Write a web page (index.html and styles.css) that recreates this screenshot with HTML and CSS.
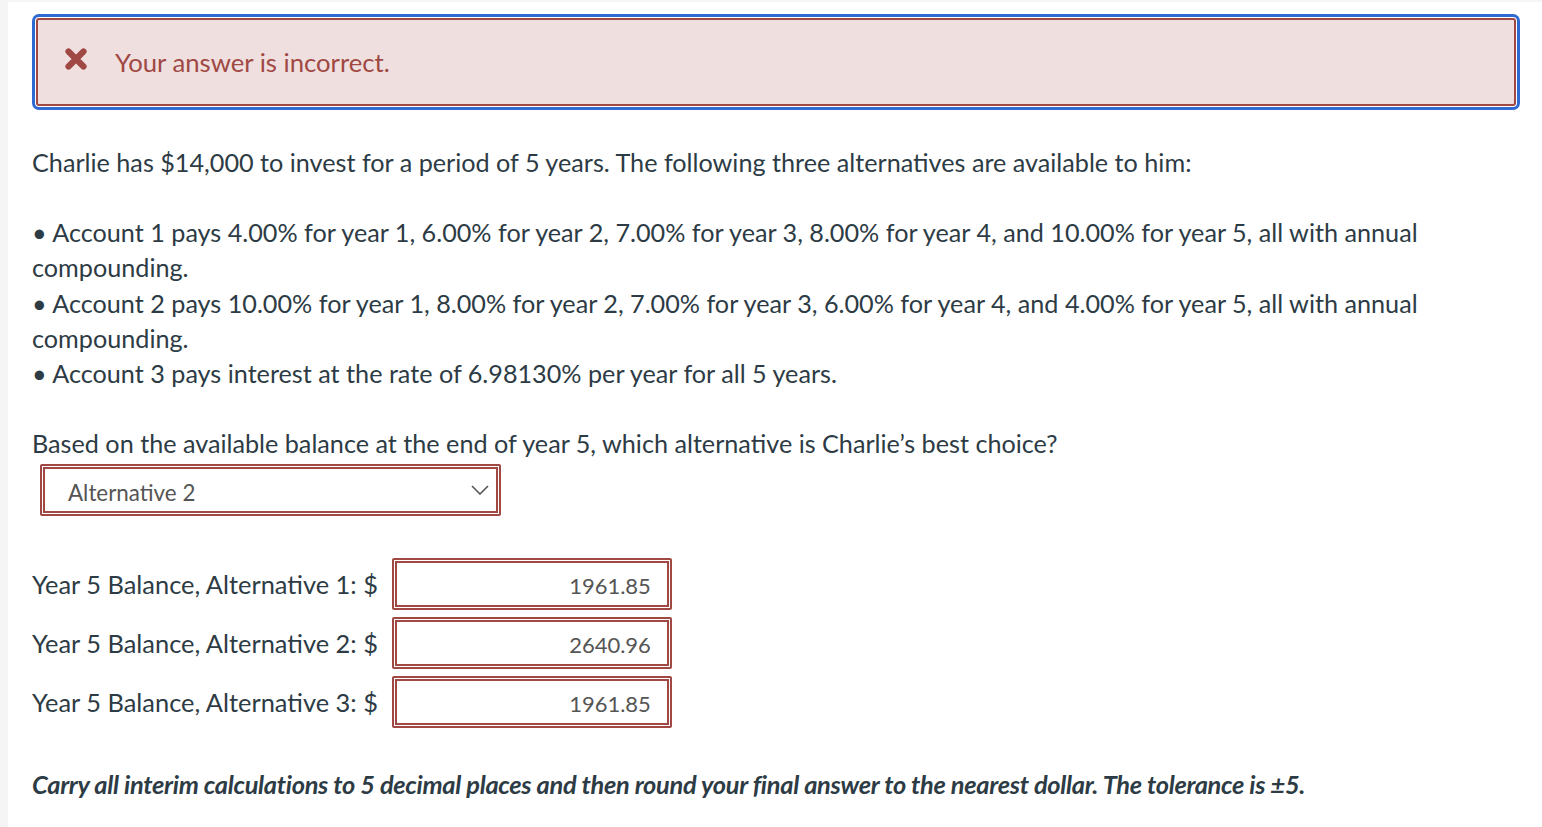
FILE: index.html
```html
<!DOCTYPE html>
<html lang="en">
<head>
<meta charset="utf-8">
<title>Question</title>
<link rel="stylesheet" href="styles.css">
</head>
<body>
<div class="panel">
  <div class="alert-focus">
    <div class="alert">
      <svg class="alert-icon" width="24" height="24" viewBox="0 0 24 24" aria-hidden="true">
        <path d="M4.5 4.5 L19.5 19.5 M19.5 4.5 L4.5 19.5" stroke="#a04843" stroke-width="6.2" stroke-linecap="round" fill="none"/>
      </svg>
      <span class="alert-text">Your answer is incorrect.</span>
    </div>
  </div>

  <p class="para">Charlie has $14,000 to invest for a period of 5 years. The following three alternatives are available to him:</p>

  <p class="para">• Account 1 pays 4.00% for year 1, 6.00% for year 2, 7.00% for year 3, 8.00% for year 4, and 10.00% for year 5, all with annual compounding.<br>• Account 2 pays 10.00% for year 1, 8.00% for year 2, 7.00% for year 3, 6.00% for year 4, and 4.00% for year 5, all with annual compounding.<br>• Account 3 pays interest at the rate of 6.98130% per year for all 5 years.</p>

  <p class="para question">Based on the available balance at the end of year 5, which alternative is Charlie’s best choice?</p>

  <div class="select">
    <span class="select-value">Alternative 2</span>
    <svg class="chevron" width="18" height="10" viewBox="0 0 18 10" aria-hidden="true">
      <path d="M1 1 L9 9 L17 1" stroke="#555" stroke-width="1.6" fill="none"/>
    </svg>
  </div>

  <div class="rows">
    <div class="row">
      <span class="label">Year 5 Balance, Alternative 1: $</span>
      <div class="field">1961.85</div>
    </div>
    <div class="row">
      <span class="label">Year 5 Balance, Alternative 2: $</span>
      <div class="field">2640.96</div>
    </div>
    <div class="row">
      <span class="label">Year 5 Balance, Alternative 3: $</span>
      <div class="field">1961.85</div>
    </div>
  </div>

  <p class="note">Carry all interim calculations to 5 decimal places and then round your final answer to the nearest dollar. The tolerance is ±5.</p>
</div>
</body>
</html>
```

FILE: styles.css
```css
html, body {
  margin: 0;
  padding: 0;
}
body {
  background: #f5f5f5;
  font-family: Lato, "Open Sans", sans-serif;
  color: #2d3b45;
  height: 827px;
  overflow: hidden;
}
.panel {
  background: #ffffff;
  margin: 2px 0 0 8px;
  padding: 12px 22px 40px 24px;
  min-height: 800px;
}
.alert-focus {
  border: 3px solid #2f69d2;
  border-radius: 7px;
  padding: 1px;
}
.alert {
  background: #efdfdf;
  border: 2px solid #a04843;
  border-radius: 3px;
  height: 88px;
  display: flex;
  align-items: center;
  padding-left: 26px;
  box-sizing: border-box;
}
.alert-icon {
  flex: none;
  margin-top: -6px;
}
.alert-text {
  color: #a04843;
  font-size: 25.7px;
  margin-left: 27px;
}
.para {
  font-size: 25.2px;
  line-height: 35.2px;
  margin: 35px 0 0 0;
}
.para + .para {
  margin-top: 35px;
}
.select {
  margin: 3px 0 0 8px;
  width: 461px;
  height: 52px;
  box-sizing: border-box;
  border: 2px solid #a04843;
  box-shadow: inset 0 0 0 1px #fff, inset 0 0 0 3px #a04843;
  border-radius: 2px;
  display: flex;
  align-items: center;
  justify-content: space-between;
  padding: 4px 10px 0 26px;
}
.select-value {
  font-size: 22.4px;
  color: #555555;
}
.chevron {
  margin-top: -4px;
}
.rows {
  display: flex;
  flex-direction: column;
  gap: 7px;
  margin-top: 42px;
}
.row {
  display: flex;
  align-items: center;
}
.label {
  font-size: 25.4px;
  margin-right: 14px;
}
.field {
  width: 280px;
  height: 52px;
  box-sizing: border-box;
  border: 2px solid #a04843;
  box-shadow: inset 0 0 0 1px #fff, inset 0 0 0 3px #a04843;
  border-radius: 2px;
  display: flex;
  align-items: center;
  justify-content: flex-end;
  padding: 2px 19px 0 0;
  font-size: 22px;
  color: #555555;
}
.note {
  margin: 39px 0 0 0;
  font-size: 25.4px;
  line-height: 35px;
  font-weight: 700;
  font-style: italic;
  letter-spacing: -0.3px;
}
```
